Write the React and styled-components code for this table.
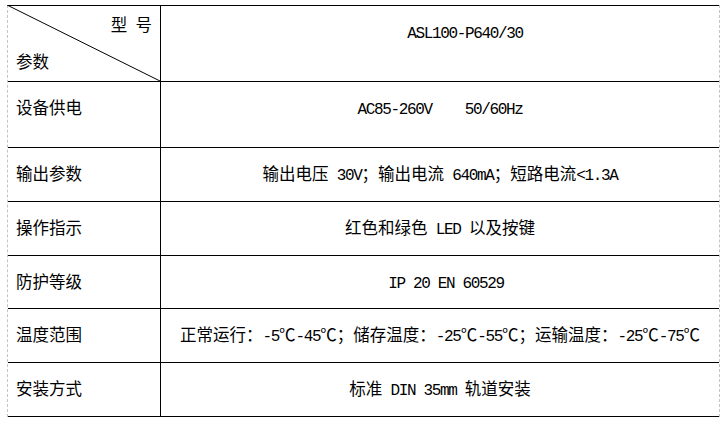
import React from "react";
import styled, { createGlobalStyle } from "styled-components";

const GlobalStyle = createGlobalStyle`
  body {
    margin: 0;
    background: #fff;
    font-family: "Noto Sans CJK SC", "Noto Sans", sans-serif;
    color: #000;
  }
`;

const Page = styled.div`
  padding: 5px 0 0 7px;
`;

const Sheet = styled.div`
  width: 713px;
  box-sizing: border-box;
  border-left: 1px dashed #c4c4c4;
  border-right: 1px dashed #c4c4c4;
`;

const Row = styled.div`
  display: grid;
  grid-template-columns: 153px 1fr;
  box-sizing: border-box;
  height: ${(p) => p.h}px;
  border-top: 1px solid #000;
  ${(p) => p.last && "border-bottom: 1px solid #000;"}
`;

const Label = styled.div`
  border-right: 1px solid #000;
  padding: 15px 0 0 8px;
  font-size: 16.5px;
  line-height: 20px;
  white-space: nowrap;
`;

const Value = styled.div`
  padding: 15px 0 0 ${(p) => p.shift || 0}px;
  text-align: center;
  font-size: 16.5px;
  line-height: 20px;
  white-space: pre;
`;

// SimSun-like half-width latin: taller glyphs squeezed to 8.25px advance
const Latin = styled.span`
  font-family: "Liberation Mono", monospace;
  font-size: 16px;
  letter-spacing: -1.35px;
`;

const HeaderCell = styled.div`
  position: relative;
  border-right: 1px solid #000;
  display: flex;
  flex-direction: column;
  justify-content: space-between;
  padding: 8px 8px 10px 8px;
  font-size: 16.5px;
  line-height: 20px;
`;

const TopRight = styled.div`
  text-align: right;
  white-space: pre;
`;

const Diagonal = styled.svg`
  position: absolute;
  left: -1px;
  top: -1px;
  width: calc(100% + 1px);
  height: calc(100% + 1px);
  pointer-events: none;
`;

const rows = [
  { label: "设备供电", h: 66, value: <Latin>{"AC85-260V    50/60Hz"}</Latin> },
  {
    label: "输出参数",
    h: 54,
    value: (
      <>
        输出电压<Latin> 30V</Latin>；输出电流<Latin> 640mA</Latin>；短路电流<Latin>{"<1.3A"}</Latin>
      </>
    ),
  },
  {
    label: "操作指示",
    h: 54,
    value: (
      <>
        红色和绿色<Latin> LED </Latin>以及按键
      </>
    ),
  },
  { label: "防护等级", h: 53, shift: 12, value: <Latin>IP 20 EN 60529</Latin> },
  {
    label: "温度范围",
    h: 54,
    value: (
      <>
        正常运行：<Latin>-5</Latin>℃<Latin>-45</Latin>℃；储存温度：<Latin>-25</Latin>℃<Latin>-55</Latin>℃；运输温度：<Latin>-25</Latin>℃<Latin>-75</Latin>℃
      </>
    ),
  },
  {
    label: "安装方式",
    h: 55,
    value: (
      <>
        标准<Latin> DIN 35mm </Latin>轨道安装
      </>
    ),
  },
];

const App = () => {
  return (
    <Page>
      <GlobalStyle />
      <Sheet>
        <Row h={76}>
          <HeaderCell>
            <Diagonal viewBox="0 0 100 100" preserveAspectRatio="none">
              <line x1="0" y1="0" x2="100" y2="100" stroke="#000" strokeWidth="1" vectorEffect="non-scaling-stroke" />
            </Diagonal>
            <TopRight>
              型<Latin> </Latin>号
            </TopRight>
            <div>参数</div>
          </HeaderCell>
          <Value shift={50}>
            <Latin>ASL100-P640/30</Latin>
          </Value>
        </Row>
        {rows.map((r, i) => (
          <Row key={r.label} h={r.h} last={i === rows.length - 1}>
            <Label>{r.label}</Label>
            <Value shift={r.shift}>{r.value}</Value>
          </Row>
        ))}
      </Sheet>
    </Page>
  );
};

export default App;
